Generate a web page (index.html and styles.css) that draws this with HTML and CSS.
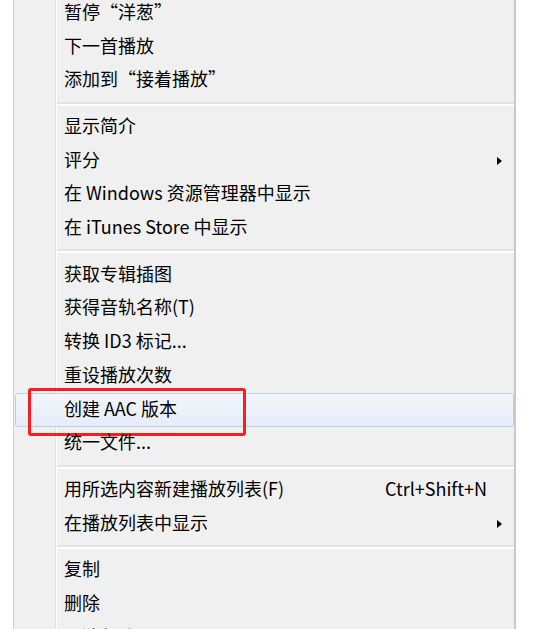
FILE: index.html
```html
<!DOCTYPE html>
<html lang="zh-CN">
<head>
    <meta charset="UTF-8">
    <meta name="viewport" content="width=device-width, initial-scale=1.0">
    <title>iTunes 右键菜单</title>
    <link rel="stylesheet" href="styles.css">
</head>
<body>

    <ul class="menu">
        <li class="item">暂停“洋葱”</li>
        <li class="item">下一首播放</li>
        <li class="item">添加到“接着播放”</li>
        <li class="sep"></li>
        <li class="item">显示简介</li>
        <li class="item sub">评分</li>
        <li class="item">在 Windows 资源管理器中显示</li>
        <li class="item">在 iTunes Store 中显示</li>
        <li class="sep"></li>
        <li class="item">获取专辑插图</li>
        <li class="item">获得音轨名称(T)</li>
        <li class="item">转换 ID3 标记...</li>
        <li class="item">重设播放次数</li>
        <li class="item hover">创建 AAC 版本<span class="mark"></span></li>
        <li class="item">统一文件...</li>
        <li class="sep"></li>
        <li class="item">用所选内容新建播放列表(F)<span class="key">Ctrl+Shift+N</span></li>
        <li class="item sub">在播放列表中显示</li>
        <li class="sep"></li>
        <li class="item">复制</li>
        <li class="item">删除</li>
        <li class="item">取消勾选</li>
    </ul>

</body>
</html>
```

FILE: styles.css
```css
/* Win7 style context menu */
body {
    margin: 0;
    background: #ffffff;
    height: 629px;
    overflow: hidden;
}

.menu {
    list-style: none;
    margin: -4px 0 0 13px;
    padding: 0;
    width: 500px;
    border-left: 1px solid #cfcfcf;
    border-right: 2px solid #c9c9c9;
    background:
        linear-gradient(to right, transparent 41px, #e0e0e0 41px, #e0e0e0 42px, #ffffff 42px, #ffffff 43px, transparent 43px),
        #f0f0f0;
    font-family: "Noto Sans CJK SC", "Microsoft YaHei", sans-serif;
    font-size: 18px;
    color: #000000;
}

.item {
    position: relative;
    height: 33.75px;
    box-sizing: border-box;
    display: flex;
    align-items: center;
    padding-left: 49px;
    padding-right: 27px;
    padding-bottom: 4px;
    margin-left: 1px;
    white-space: nowrap;
}

.key {
    margin-left: auto;
}

.sub::after {
    content: "";
    position: absolute;
    right: 12px;
    top: 50%;
    margin-top: -4px;
    border-left: 5px solid #000000;
    border-top: 4px solid transparent;
    border-bottom: 4px solid transparent;
}

.hover {
    border: 1px solid #b4d0f4;
    border-radius: 3px;
    background: linear-gradient(#f3f6fb, #e6edf8);
    padding-left: 48px;
    padding-bottom: 3px;
}

.mark {
    position: absolute;
    left: 12px;
    top: -6px;
    width: 212px;
    height: 42px;
    border: 3px solid #ff1c1c;
    border-radius: 3px;
}

.sep {
    height: 12.75px;
    margin-left: 43px;
    display: flex;
    flex-direction: column;
    justify-content: center;
}

.sep::before {
    content: "";
    display: block;
    height: 2px;
    background: #e2e2e2;
}

.sep::after {
    content: "";
    display: block;
    height: 2px;
    background: #ffffff;
}
```
